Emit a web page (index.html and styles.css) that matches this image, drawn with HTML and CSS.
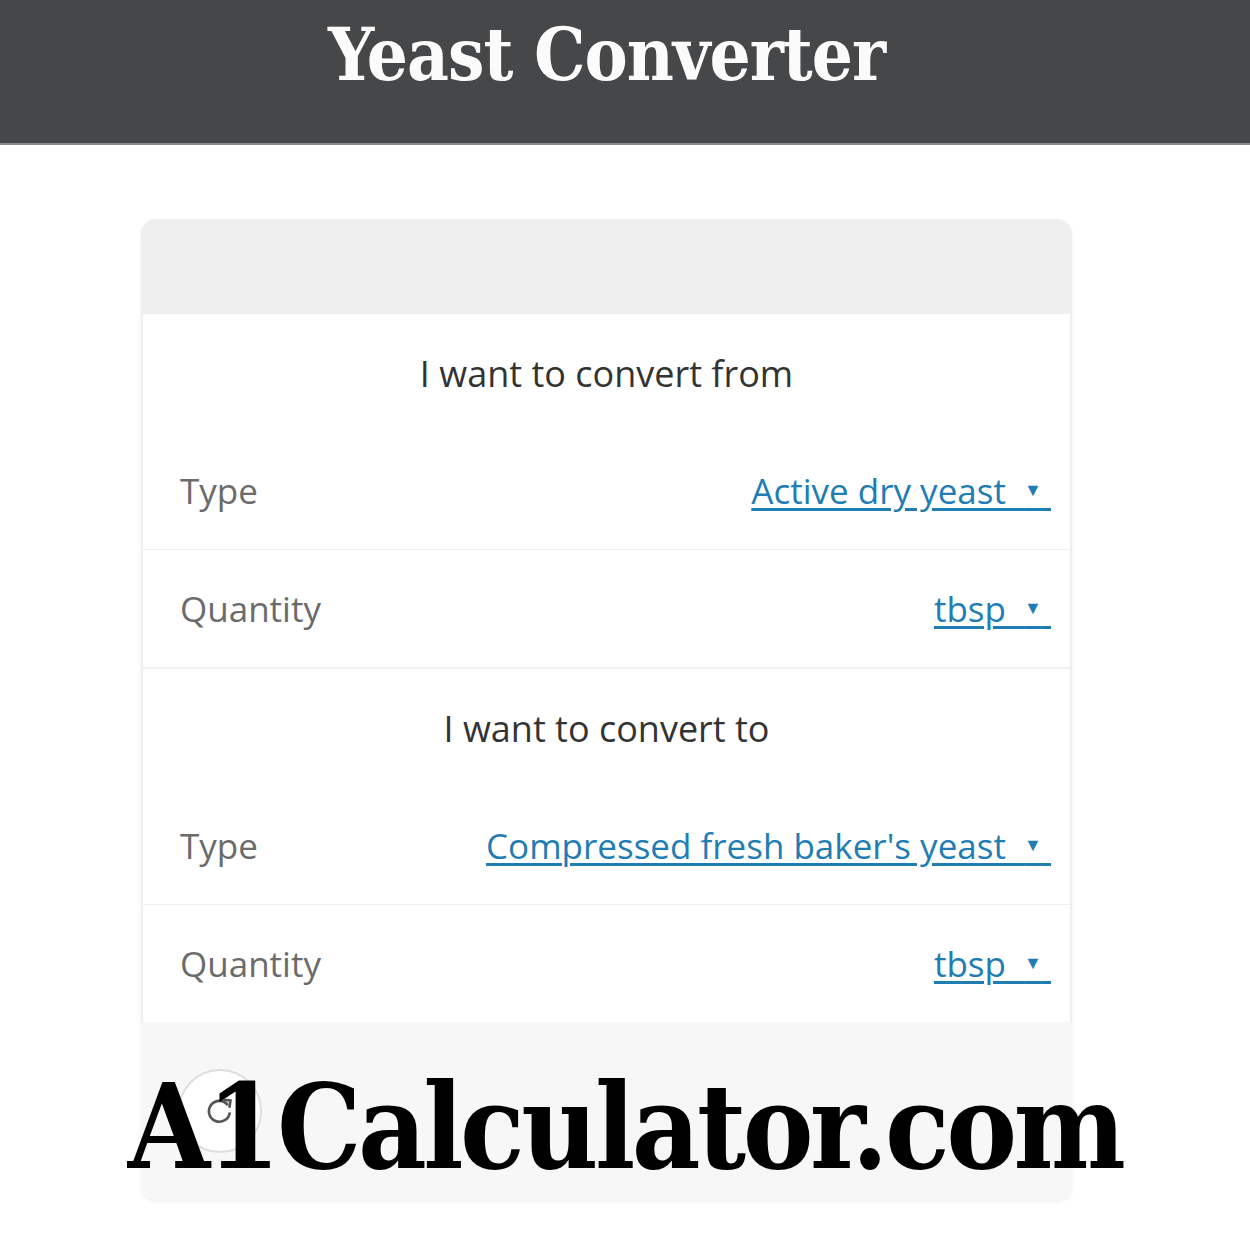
FILE: index.html
```html
<!DOCTYPE html>
<html lang="en">
<head>
    <meta charset="UTF-8">
    <meta name="viewport" content="width=device-width, initial-scale=1.0">
    <title>Yeast Converter</title>
    <link rel="stylesheet" href="styles.css">
</head>
<body>
    <header class="topbar">
        <div class="wrap">
            <h1>Yeast Converter</h1>
        </div>
    </header>

    <div class="wrap">
        <div class="calc">
            <div class="calc-head"></div>

            <div class="calc-body">
                <div class="section-title">I want to convert from</div>
                <div class="row">
                    <span class="label">Type</span>
                    <a href="#" class="pick">Active dry yeast &nbsp;<span class="caret">&#9660;</span>&nbsp;</a>
                </div>
                <div class="row">
                    <span class="label">Quantity</span>
                    <a href="#" class="pick">tbsp &nbsp;<span class="caret">&#9660;</span>&nbsp;</a>
                </div>

                <div class="section-title">I want to convert to</div>
                <div class="row">
                    <span class="label">Type</span>
                    <a href="#" class="pick">Compressed fresh baker's yeast &nbsp;<span class="caret">&#9660;</span>&nbsp;</a>
                </div>
                <div class="row last">
                    <span class="label">Quantity</span>
                    <a href="#" class="pick">tbsp &nbsp;<span class="caret">&#9660;</span>&nbsp;</a>
                </div>
            </div>

            <div class="calc-foot">
                <button class="reset" type="button" title="Reset">
                    <svg width="34" height="34" viewBox="0 0 26 26">
                        <path d="M19 8.5 A8 8 0 1 0 20.5 14" fill="none" stroke="#555" stroke-width="2"/>
                        <path d="M15.5 4.5 L21 5 L20.2 10.5" fill="none" stroke="#555" stroke-width="2"/>
                    </svg>
                </button>
            </div>
        </div>
    </div>

    <div class="stamp">A1Calculator.com</div>
</body>
</html>
```

FILE: styles.css
```css
body {
    margin: 0;
    padding: 0;
    background-color: #fff;
    font-family: "Open Sans", "Noto Sans", sans-serif;
}
.wrap {
    width: 1213px;
}
.topbar {
    background-color: #464748;
    border-bottom: 2px solid #8a8a8a;
    height: 143px;
}
.topbar h1 {
    margin: 0;
    padding-top: 13px;
    text-align: center;
    color: #fbfbfb;
    font-family: "DejaVu Serif", serif;
    font-stretch: condensed;
    font-weight: bold;
    font-size: 72px;
    line-height: 84px;
    letter-spacing: -1px;
}
.calc {
    width: 931px;
    margin: 74px auto 60px;
    background-color: #efefef;
    border-radius: 15px;
    box-shadow: 0 2px 4px rgba(0, 0, 0, 0.06);
    overflow: hidden;
}
.calc-head {
    height: 95px;
}
.calc-body {
    background-color: #fff;
    margin: 0 2px;
}
.section-title {
    padding: 40px 0 38px;
    line-height: 40px;
    text-align: center;
    font-size: 36px;
    color: #333;
    border-top: 1px solid #f0f0f0;
}
.section-title:first-child {
    border-top: none;
}
.row {
    display: flex;
    justify-content: space-between;
    align-items: center;
    padding: 40px 19px 39px 37px;
    font-size: 35px;
    line-height: 38px;
    border-bottom: 1px solid #f0f0f0;
}
.row.last {
    border-bottom: none;
}
.label {
    color: #6b6b6b;
}
.pick {
    color: #1f7db4;
    text-decoration: underline;
    text-decoration-thickness: 3px;
    text-underline-offset: 4px;
    white-space: pre;
}
.caret {
    font-size: 18px;
    line-height: 18px;
    vertical-align: 8px;
}
.calc-foot {
    background-color: #f7f7f7;
    height: 178px;
    display: flex;
    align-items: center;
    padding-left: 37px;
}
.reset {
    width: 84px;
    height: 84px;
    border-radius: 50%;
    border: 2px solid #dedede;
    background-color: #fff;
    display: flex;
    align-items: center;
    justify-content: center;
    padding: 0;
}
.stamp {
    position: absolute;
    left: 0;
    top: 1062px;
    width: 1250px;
    text-align: center;
    font-family: "DejaVu Serif", serif;
    font-stretch: condensed;
    font-weight: bold;
    font-size: 118px;
    line-height: 130px;
    color: #000;
    letter-spacing: -3.5px;
}
```
